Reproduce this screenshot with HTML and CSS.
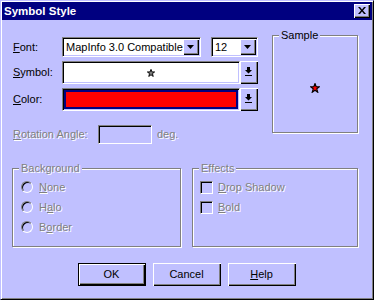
FILE: index.html
```html
<!DOCTYPE html>
<html lang="en">
<head>
    <meta charset="UTF-8">
    <title>Symbol Style</title>
    <link rel="stylesheet" href="styles.css">
</head>
<body>
    <div class="window">
        <div class="titlebar">
            <span class="title">Symbol Style</span>
            <span class="close">
                <svg width="8" height="7" viewBox="0 0 8 7"><path d="M0 0h2l2 2.5L6 0h2L5 3.5 8 7H6L4 4.5 2 7H0l3-3.5z" fill="#000"/></svg>
            </span>
        </div>

        <div class="main">
            <div class="left">
                <div class="row row-font">
                    <span class="lbl"><u>F</u>ont:</span>
                    <div class="combo combo-font">
                        <span class="combo-text">MapInfo 3.0 Compatible</span>
                        <span class="drop"><svg width="7" height="4" viewBox="0 0 7 4"><path d="M0 0h7L3.5 4z" fill="#000"/></svg></span>
                    </div>
                    <div class="combo combo-size">
                        <span class="combo-text">12</span>
                        <span class="drop"><svg width="7" height="4" viewBox="0 0 7 4"><path d="M0 0h7L3.5 4z" fill="#000"/></svg></span>
                    </div>
                </div>
                <div class="row row-pick">
                    <span class="lbl"><u>S</u>ymbol:</span>
                    <div class="picker">
                        <div class="field field-symbol">
                            <svg width="8" height="8" viewBox="0 0 10 10"><path d="M5 .5l1.2 3.2h3.3L6.8 5.8l1 3.5L5 7.2 2.2 9.3l1-3.5L.5 3.7h3.3z" fill="#808080" stroke="#000" stroke-width="1.2"/></svg>
                        </div>
                        <span class="drop drop-big"><svg width="7" height="9" viewBox="0 0 7 9"><path d="M2 0h3v3h2L3.5 6.5 0 3h2z" fill="#000"/><rect x="0" y="8" width="7" height="1" fill="#000"/></svg></span>
                    </div>
                </div>
                <div class="row row-pick">
                    <span class="lbl"><u>C</u>olor:</span>
                    <div class="picker">
                        <div class="field field-color"><div class="swatch"></div></div>
                        <span class="drop drop-big"><svg width="7" height="9" viewBox="0 0 7 9"><path d="M2 0h3v3h2L3.5 6.5 0 3h2z" fill="#000"/><rect x="0" y="8" width="7" height="1" fill="#000"/></svg></span>
                    </div>
                </div>
                <div class="rotation disabled">
                    <span class="rot-lbl"><u>R</u>otation Angle:</span>
                    <span class="angle"></span>
                    <span class="deg">deg.</span>
                </div>
            </div>

            <div class="group sample">
                <span class="group-title">Sample</span>
                <div class="sample-view">
                    <svg width="10" height="10" viewBox="0 0 10 10"><path d="M5 .5l1.2 3.2h3.3L6.8 5.8l1 3.5L5 7.2 2.2 9.3l1-3.5L.5 3.7h3.3z" fill="#ff0000" stroke="#000" stroke-width="1.1"/></svg>
                </div>
            </div>
        </div>

        <div class="groups disabled">
            <div class="group group-bg">
                <span class="group-title">Background</span>
                <div class="opt"><span class="radio"></span><span><u>N</u>one</span></div>
                <div class="opt"><span class="radio"></span><span>H<u>a</u>lo</span></div>
                <div class="opt"><span class="radio"></span><span>B<u>o</u>rder</span></div>
            </div>
            <div class="group group-fx">
                <span class="group-title">Effects</span>
                <div class="opt"><span class="check"></span><span><u>D</u>rop Shadow</span></div>
                <div class="opt"><span class="check"></span><span><u>B</u>old</span></div>
            </div>
        </div>

        <div class="buttons">
            <button class="btn btn-default">OK</button>
            <button class="btn">Cancel</button>
            <button class="btn"><u>H</u>elp</button>
        </div>
    </div>
</body>
</html>
```

FILE: styles.css
```css
body {
    margin: 0;
    background-color: #c0c0ff;
    font-family: "Liberation Sans", Arial, sans-serif;
    font-size: 11px;
    line-height: 13px;
    color: #000;
}
.window {
    width: 374px;
    height: 300px;
    box-sizing: border-box;
    border: 1px solid;
    border-color: #c0c0ff #000 #000 #c0c0ff;
    box-shadow: inset 1px 1px 0 #fff, inset -1px -1px 0 #808080;
    padding: 1px;
    background-color: #c0c0ff;
}
.titlebar {
    height: 18px;
    background-color: #000080;
    display: flex;
    align-items: center;
    justify-content: space-between;
    padding: 0 2px 0 2px;
}
.title {
    color: #fff;
    font-weight: bold;
    font-size: 11.5px;
}
.close {
    width: 16px;
    height: 14px;
    box-sizing: border-box;
    background-color: #c0c0ff;
    box-shadow: inset 1px 1px 0 #fff, inset -1px -1px 0 #000, inset -2px -2px 0 #808080;
    display: flex;
    justify-content: center;
    align-items: center;
    padding: 0 1px 1px 0;
}

/* top part */
.main {
    display: flex;
    align-items: flex-start;
    padding-left: 11px;
}
.left {
    width: 245px;
    margin-top: 17px;
    display: flex;
    flex-direction: column;
    gap: 4px;
}
.row {
    display: flex;
    align-items: center;
}
.lbl {
    width: 49px;
}
.combo, .field, .angle {
    box-sizing: border-box;
    border: 1px solid;
    border-color: #808080 #fff #fff #808080;
    box-shadow: inset 1px 1px 0 #000, inset -1px -1px 0 #c0c0ff;
}
.combo {
    height: 20px;
    background-color: #fff;
    display: flex;
    align-items: center;
    justify-content: space-between;
    padding: 1px;
}
.combo-text {
    margin-left: 2px;
}
.combo-font {
    width: 139px;
    margin-right: 10px;
}
.combo-size {
    width: 47px;
}
.drop {
    width: 16px;
    height: 16px;
    box-sizing: border-box;
    background-color: #c0c0ff;
    box-shadow: inset 1px 1px 0 #fff, inset -1px -1px 0 #000, inset -2px -2px 0 #808080;
    display: flex;
    justify-content: center;
    align-items: center;
    padding: 0 1px 1px 0;
}
.picker {
    width: 196px;
    height: 23px;
    display: flex;
}
.field {
    flex: 1;
    background-color: #fff;
    display: flex;
    justify-content: center;
    align-items: center;
    padding: 2px;
}
.field-color {
    padding: 1px;
}
.swatch {
    align-self: stretch;
    flex: 1;
    border: 2px solid #000080;
    background-color: #ff0000;
}
.drop-big {
    width: 18px;
    height: 23px;
    padding: 0 1px 2px 0;
}
.rotation {
    display: flex;
    align-items: center;
    margin-top: 10px;
}
.rot-lbl {
    width: 85px;
}
.angle {
    width: 54px;
    height: 19px;
    background-color: #c0c0ff;
}
.deg {
    margin-left: 5px;
}
.disabled {
    color: #808080;
    text-shadow: 1px 1px 0 #fff;
}

/* group boxes */
.group {
    box-sizing: border-box;
    border: 1px solid #808080;
    box-shadow: inset 1px 1px 0 #fff, 1px 1px 0 #fff;
    display: flex;
    flex-direction: column;
}
.group-title {
    align-self: flex-start;
    margin: -7px 0 0 6px;
    padding: 0 2px;
    background-color: #c0c0ff;
}
.sample {
    width: 86px;
    height: 98px;
    margin: 15px 0 0 14px;
    color: #000;
}
.sample-view {
    flex: 1;
    display: flex;
    justify-content: center;
    align-items: center;
    padding: 2px 0 0 0;
}
.groups {
    display: flex;
    gap: 11px;
    padding-left: 10px;
    margin-top: 24px;
}
.group-bg {
    width: 169px;
    height: 79px;
}
.group-fx {
    width: 166px;
    height: 79px;
}
.opt {
    height: 20px;
    display: flex;
    align-items: center;
}
.group-title + .opt {
    margin-top: 2px;
}
.radio {
    width: 12px;
    height: 12px;
    box-sizing: border-box;
    border-radius: 50%;
    border: 1px solid;
    border-color: #808080 #fff #fff #808080;
    box-shadow: inset 1px 1px 0 #000;
    margin: 0 6px 0 8px;
}
.check {
    width: 13px;
    height: 13px;
    box-sizing: border-box;
    border: 1px solid;
    border-color: #808080 #fff #fff #808080;
    box-shadow: inset 1px 1px 0 #000, inset -1px -1px 0 #c0c0ff;
    margin: 0 5px 0 7px;
}

/* buttons */
.buttons {
    display: flex;
    justify-content: center;
    gap: 7px;
    margin-top: 16px;
}
.btn {
    width: 68px;
    height: 23px;
    box-sizing: border-box;
    border: none;
    background-color: #c0c0ff;
    font-family: "Liberation Sans", Arial, sans-serif;
    font-size: 11px;
    color: #000;
    padding: 0 1px 1px 0;
    box-shadow: inset 1px 1px 0 #fff, inset -1px -1px 0 #000, inset -2px -2px 0 #808080;
}
.btn-default {
    border: 1px solid #000;
}
```
